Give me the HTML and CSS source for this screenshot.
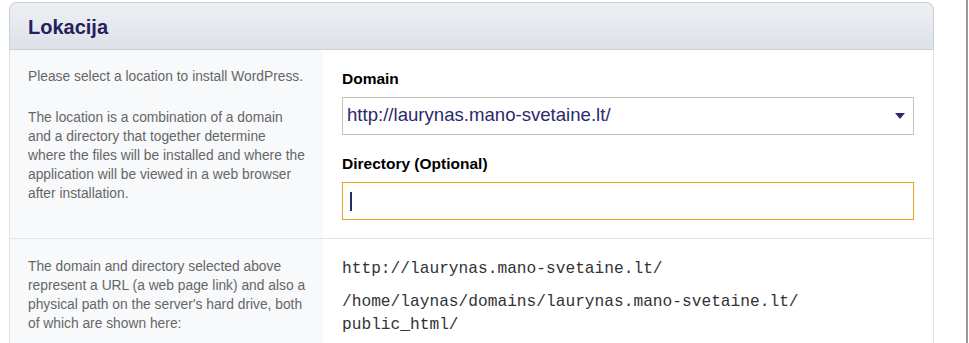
FILE: index.html
```html
<!DOCTYPE html>
<html>
<head>
<meta charset="utf-8">
<link rel="stylesheet" href="styles.css">
</head>
<body>
<div class="page">
  <div class="panel">
    <div class="panel-head"><h2 class="title">Lokacija</h2></div>
    <div class="row">
      <div class="info">
        <p class="info-p">Please select a location to install WordPress.</p>
        <p class="info-p">The location is a combination of a domain and a directory that together determine where the files will be installed and where the application will be viewed in a web browser after installation.</p>
      </div>
      <div class="fields">
        <label class="label">Domain</label>
        <div class="select">
          <span class="select-text">http://laurynas.mano-svetaine.lt/</span>
          <svg class="arrow" width="10" height="6" viewBox="0 0 10 6"><path d="M0 0H10L5 6Z" fill="#2b2a6b"/></svg>
        </div>
        <label class="label label-dir">Directory (Optional)</label>
        <div class="input"><span class="caret"></span></div>
      </div>
    </div>
    <div class="row row-last">
      <div class="info">
        <p class="info-p">The domain and directory selected above represent a URL (a web page link) and also a physical path on the server's hard drive, both of which are shown here:</p>
      </div>
      <div class="paths">
        <div class="path path-url">http://laurynas.mano-svetaine.lt/</div>
        <div class="path">/home/laynas/domains/laurynas.mano-svetaine.lt/<br>public_html/</div>
      </div>
    </div>
  </div>
  <div class="scrollbar-edge"></div>
</div>
</body>
</html>
```
FILE: styles.css
```css
html, body {
  margin: 0;
  padding: 0;
  background: #ffffff;
  font-family: "Liberation Sans", Arial, sans-serif;
  overflow: hidden;
}
.page {
  display: flex;
  align-items: flex-start;
  height: 343px;
}
.panel {
  margin: 2px 0 0 9px;
  width: 925px;
  box-sizing: border-box;
  border: 1px solid #dfe2e8;
  border-top: none;
  border-radius: 8px 8px 0 0;
  flex-shrink: 0;
}
.panel-head {
  height: 46px;
  margin: 0 -1px;
  border: 1px solid #c9ced8;
  border-radius: 8px 8px 0 0;
  background: linear-gradient(#eef0f3, #dde1e8);
  display: flex;
  align-items: center;
  padding-left: 18px;
}
.title {
  margin: 0;
  font-size: 20px;
  font-weight: bold;
  color: #24215f;
  position: relative;
  top: 1px;
}
.row {
  display: flex;
  border-bottom: 1px solid #e3e5ea;
}
.row-last {
  border-bottom: none;
  height: 120px;
}
.info {
  width: 313px;
  flex-shrink: 0;
  background: #f8f9fb;
  box-sizing: border-box;
  padding: 17px 17px 0 18px;
}
.row-last .info {
  padding-top: 18px;
}
.info-p {
  margin: 0 0 22px;
  font-size: 13.8px;
  line-height: 19px;
  color: #666666;
}
.fields {
  flex: 1;
  padding: 18px 18px 18px 19px;
  display: flex;
  flex-direction: column;
}
.label {
  font-size: 15.5px;
  font-weight: bold;
  color: #000;
  line-height: 20px;
  position: relative;
  top: 1px;
}
.label-dir {
  margin-top: 18px;
}
.select, .input {
  margin-top: 9px;
  width: 572px;
  height: 38px;
  box-sizing: border-box;
  border: 1px solid #c2c2c2;
  display: flex;
  align-items: center;
  background: #fff;
}
.select {
  padding: 0 8px 0 4px;
  justify-content: space-between;
}
.select-text {
  font-size: 18.6px;
  color: #2b2a6b;
  position: relative;
  top: -1px;
}
.arrow {
  display: block;
}
.input {
  border-color: #eba21a;
  padding-left: 7px;
}
.caret {
  display: block;
  width: 2px;
  height: 19px;
  background: #2b2a6b;
}
.paths {
  flex: 1;
  padding: 19px 0 0 19px;
}
.path {
  font-family: "Liberation Mono", "Courier New", monospace;
  font-size: 16.2px;
  line-height: 23px;
  color: #333;
}
.path-url {
  margin-bottom: 10px;
}
.scrollbar-edge {
  margin-left: 32px;
  width: 2px;
  height: 343px;
  background: #9b9b9b;
  flex-shrink: 0;
}
```
